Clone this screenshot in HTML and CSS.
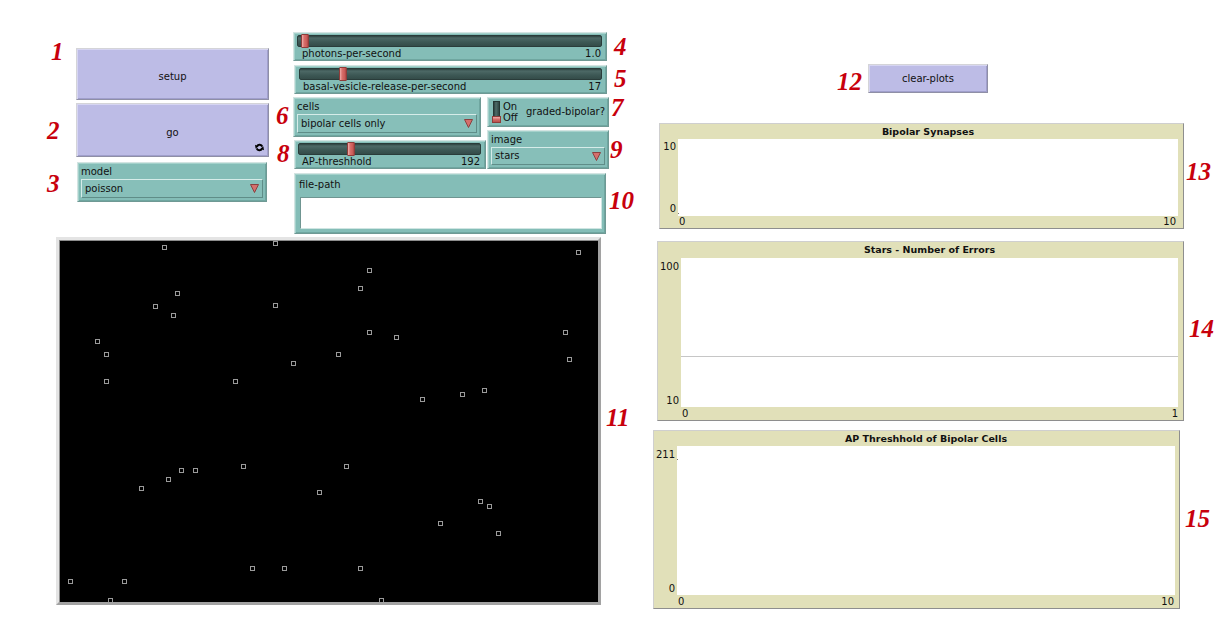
FILE: index.html
```html
<!DOCTYPE html>
<html>
<head>
<meta charset="utf-8">
<link rel="stylesheet" href="styles.css">
</head>
<body>
<div class="page">
  <div class="left-area">
    <div class="top">
      <div class="btn-col">
        <div class="nbtn setup">setup</div>
        <div class="nbtn go">go
          <svg class="forever" width="9" height="9" viewBox="0 0 9 9">
            <path d="M7.3 3.7 A3 3 0 0 0 2 3.1" fill="none" stroke="#000" stroke-width="2"/>
            <polygon points="0,1.8 3.6,3.4 0.6,5.6" fill="#000"/>
            <path d="M1.7 5.3 A3 3 0 0 0 7 5.9" fill="none" stroke="#000" stroke-width="2"/>
            <polygon points="9,7.2 5.4,5.6 8.4,3.4" fill="#000"/>
          </svg>
        </div>
        <div class="tw chooser model">
          <div class="clabel">model</div>
          <div class="cbox"><span>poisson</span><svg class="tri" width="9" height="9" viewBox="0 0 9 9"><polygon points="0.5,0.5 8.5,0.5 4.5,8.5" fill="#d56f6c" stroke="#8a4040" stroke-width="1"/></svg></div>
        </div>
      </div>
      <div class="mid-col">
        <div class="tw slider photons">
          <div class="track"><div class="knob" style="left:3px"></div></div>
          <div class="slabel"><span>photons-per-second</span><span>1.0</span></div>
        </div>
        <div class="tw slider basal">
          <div class="track"><div class="knob" style="left:39px"></div></div>
          <div class="slabel"><span>basal-vesicle-release-per-second</span><span>17</span></div>
        </div>
        <div class="row">
          <div class="col-a">
            <div class="tw chooser cells">
              <div class="clabel">cells</div>
              <div class="cbox"><span>bipolar cells only</span><svg class="tri" width="9" height="9" viewBox="0 0 9 9"><polygon points="0.5,0.5 8.5,0.5 4.5,8.5" fill="#d56f6c" stroke="#8a4040" stroke-width="1"/></svg></div>
            </div>
            <div class="tw slider ap">
              <div class="track"><div class="knob" style="left:48px"></div></div>
              <div class="slabel"><span>AP-threshhold</span><span>192</span></div>
            </div>
          </div>
          <div class="col-b">
            <div class="tw switch">
              <div class="sw"><div class="sw-track"></div><div class="sw-knob"></div></div>
              <div class="onoff"><span>On</span><span>Off</span></div>
              <div class="swlabel">graded-bipolar?</div>
            </div>
            <div class="tw chooser image">
              <div class="clabel">image</div>
              <div class="cbox"><span>stars</span><svg class="tri" width="9" height="9" viewBox="0 0 9 9"><polygon points="0.5,0.5 8.5,0.5 4.5,8.5" fill="#d56f6c" stroke="#8a4040" stroke-width="1"/></svg></div>
            </div>
          </div>
        </div>
        <div class="tw input filepath">
          <div class="clabel">file-path</div>
          <div class="field"></div>
        </div>
      </div>
    </div>
    <div class="world">
      <svg width="539" height="362" viewBox="0 0 539 362" class="stars">
        <g fill="none" stroke="#9a9a9a" stroke-width="1">
          <rect x="103.5" y="5.5" width="4" height="4"/>
          <rect x="214.5" y="1.5" width="4" height="4"/>
          <rect x="517.5" y="10.5" width="4" height="4"/>
          <rect x="308.5" y="28.5" width="4" height="4"/>
          <rect x="299.5" y="46.5" width="4" height="4"/>
          <rect x="116.5" y="51.5" width="4" height="4"/>
          <rect x="94.5" y="64.5" width="4" height="4"/>
          <rect x="214.5" y="63.5" width="4" height="4"/>
          <rect x="112.5" y="73.5" width="4" height="4"/>
          <rect x="308.5" y="90.5" width="4" height="4"/>
          <rect x="335.5" y="95.5" width="4" height="4"/>
          <rect x="504.5" y="90.5" width="4" height="4"/>
          <rect x="36.5" y="99.5" width="4" height="4"/>
          <rect x="45.5" y="112.5" width="4" height="4"/>
          <rect x="277.5" y="112.5" width="4" height="4"/>
          <rect x="232.5" y="121.5" width="4" height="4"/>
          <rect x="508.5" y="117.5" width="4" height="4"/>
          <rect x="45.5" y="139.5" width="4" height="4"/>
          <rect x="174.5" y="139.5" width="4" height="4"/>
          <rect x="423.5" y="148.5" width="4" height="4"/>
          <rect x="401.5" y="152.5" width="4" height="4"/>
          <rect x="361.5" y="157.5" width="4" height="4"/>
          <rect x="120.5" y="228.5" width="4" height="4"/>
          <rect x="134.5" y="228.5" width="4" height="4"/>
          <rect x="182.5" y="224.5" width="4" height="4"/>
          <rect x="285.5" y="224.5" width="4" height="4"/>
          <rect x="107.5" y="237.5" width="4" height="4"/>
          <rect x="80.5" y="246.5" width="4" height="4"/>
          <rect x="258.5" y="250.5" width="4" height="4"/>
          <rect x="419.5" y="259.5" width="4" height="4"/>
          <rect x="428.5" y="264.5" width="4" height="4"/>
          <rect x="379.5" y="281.5" width="4" height="4"/>
          <rect x="437.5" y="291.5" width="4" height="4"/>
          <rect x="191.5" y="326.5" width="4" height="4"/>
          <rect x="223.5" y="326.5" width="4" height="4"/>
          <rect x="299.5" y="326.5" width="4" height="4"/>
          <rect x="9.5" y="339.5" width="4" height="4"/>
          <rect x="63.5" y="339.5" width="4" height="4"/>
          <rect x="49.5" y="358.5" width="4" height="4"/>
          <rect x="320.5" y="358.5" width="4" height="4"/>
        </g>
      </svg>
    </div>
  </div>

  <div class="right-area">
    <div class="nbtn clear">clear-plots</div>

    <div class="plot p1">
      <div class="ptitle">Bipolar Synapses</div>
      <div class="pbody">
        <div class="yaxis"><span>10</span><span>0</span></div>
        <div class="canvas"><span class="pen-dot bl"></span></div>
      </div>
      <div class="xaxis"><span>0</span><span>10</span></div>
    </div>

    <div class="plot p2">
      <div class="ptitle">Stars - Number of Errors</div>
      <div class="pbody">
        <div class="yaxis"><span>100</span><span>10</span></div>
        <div class="canvas"><div class="hline"></div></div>
      </div>
      <div class="xaxis"><span>0</span><span>1</span></div>
    </div>

    <div class="plot p3">
      <div class="ptitle">AP Threshhold of Bipolar Cells</div>
      <div class="pbody">
        <div class="yaxis"><span>211</span><span>0</span></div>
        <div class="canvas"><span class="pen-dot tl"></span></div>
      </div>
      <div class="xaxis"><span>0</span><span>10</span></div>
    </div>
  </div>

  <span class="ann a1">1</span>
  <span class="ann a2">2</span>
  <span class="ann a3">3</span>
  <span class="ann a4">4</span>
  <span class="ann a5">5</span>
  <span class="ann a6">6</span>
  <span class="ann a7">7</span>
  <span class="ann a8">8</span>
  <span class="ann a9">9</span>
  <span class="ann a10">10</span>
  <span class="ann a11">11</span>
  <span class="ann a12">12</span>
  <span class="ann a13">13</span>
  <span class="ann a14">14</span>
  <span class="ann a15">15</span>
</div>
</body>
</html>
```
FILE: styles.css
```css
* { box-sizing: border-box; }
html, body { margin: 0; padding: 0; }
body {
  width: 1220px;
  height: 626px;
  overflow: hidden;
  background: #ffffff;
  font-family: "DejaVu Sans", "Noto Sans", sans-serif;
  font-size: 10px;
  line-height: 12px;
  color: #111;
}
.page { position: relative; display: flex; width: 1220px; height: 626px; }

.left-area { width: 640px; display: flex; flex-direction: column; }
.top { display: flex; align-items: flex-start; height: 234px; }
.btn-col { margin: 48px 0 0 76px; width: 193px; display: flex; flex-direction: column; }
.mid-col { margin: 32px 0 0 24px; width: 316px; display: flex; flex-direction: column; }

/* buttons */
.nbtn {
  position: relative;
  display: flex;
  align-items: center;
  justify-content: center;
  background: #bdbce6;
  border: 1px solid;
  border-color: #d4d4d8 #8f8fa6 #8f8fa6 #d4d4d8;
  box-shadow: inset 1px 1px 0 #d6d5f2, inset -1px -1px 0 #a09fcc;
  color: #111;
  white-space: nowrap;
}
.setup { height: 52px; padding-top: 5px; }
.go { height: 54px; margin-top: 3px; padding-top: 6px; }
.forever { position: absolute; right: 4px; bottom: 4px; }

/* teal widgets */
.tw {
  background: #84bdb7;
  border: 1px solid;
  border-color: #d3e4e2 #6f9994 #6f9994 #d3e4e2;
  box-shadow: inset 1px 1px 0 #a4d1cb, inset -1px -1px 0 #6fa6a0;
  white-space: nowrap;
}

/* chooser */
.chooser { padding: 3px; display: flex; flex-direction: column; }
.clabel { line-height: 12px; }
.cbox {
  margin-top: 1px;
  height: 20px;
  display: flex;
  align-items: center;
  justify-content: space-between;
  padding: 0 3px 0 3px;
  background: #87bfb9;
  border: 1px solid;
  border-color: #d6ece9 #5f8d88 #5f8d88 #d6ece9;
}
.tri { display: block; }
.model { width: 190px; height: 40px; margin: 5px 0 0 1px; }
.cells { width: 188px; height: 40px; }
.image { width: 122px; height: 39px; margin-top: 3px; }
.image .cbox { height: 19px; }

/* slider */
.slider { display: flex; flex-direction: column; height: 29px; }
.track {
  position: relative;
  height: 12px;
  margin: 2px 4px 0 3px;
  background: linear-gradient(#2c413f, #4d6966 20%, #3d5855 60%, #344c49);
  border: 1px solid #2a3c3a;
  border-radius: 2px;
}
.knob {
  position: absolute;
  top: -2px;
  width: 8px;
  height: 14px;
  background: linear-gradient(to right, #f1b0ad, #d96f6b 35%, #c95a57 80%, #a94442);
  border: 1px solid #8e3c3a;
  border-radius: 1px;
}
.slabel {
  display: flex;
  justify-content: space-between;
  line-height: 12px;
  padding: 1px 5px 0 8px;
}
.photons { width: 314px; }
.basal { width: 313px; margin: 4px 0 0 1px; }
.basal .track { margin-left: 4px; }
.ap { width: 192px; margin: 3px 0 0 1px; }
.ap .slabel { padding-left: 7px; }

.row { display: flex; margin-top: 3px; height: 72px; }
.col-a { width: 193px; display: flex; flex-direction: column; }
.col-b { margin-left: 1px; display: flex; flex-direction: column; }

/* switch */
.switch {
  width: 122px;
  height: 30px;
  display: flex;
  align-items: center;
  padding: 0 2px 0 4px;
}
.sw { position: relative; flex: none; width: 9px; height: 22px; }
.sw-track {
  position: absolute;
  left: 1px; top: 0;
  width: 7px; height: 21px;
  background: linear-gradient(to right, #2c403e, #4f6c69 40%, #2f4542);
  border: 1px solid #263735;
}
.sw-knob {
  position: absolute;
  left: 0; bottom: 0;
  width: 9px; height: 7px;
  background: linear-gradient(#f0aeab, #d46a66 50%, #b8504d);
  border: 1px solid #8e3c3a;
}
.onoff {
  flex: none;
  display: flex;
  flex-direction: column;
  margin-left: 2px;
  line-height: 11px;
  width: 17px;
}
.swlabel { margin-left: 6px; flex: none; }

/* input */
.filepath {
  width: 312px;
  height: 61px;
  margin: 4px 0 0 1px;
  padding: 5px 0 0 4px;
}
.field {
  margin: 6px 0 0 1px;
  width: 302px;
  height: 32px;
  background: #ffffff;
  border: 1px solid;
  border-color: #6f9591 #cfe5e2 #cfe5e2 #6f9591;
}

/* world */
.world {
  margin: 3px 0 0 56px;
  width: 545px;
  height: 368px;
  background: #000;
  border: 3px solid;
  border-color: #e4e4e4 #a2a2a2 #a2a2a2 #e4e4e4;
  box-shadow: inset 1px 1px 0 #8c8c8c;
  overflow: hidden;
}
.stars { display: block; }

/* right area */
.right-area { margin-left: 13px; padding-top: 64px; display: flex; flex-direction: column; }
.clear { width: 120px; height: 29px; margin-left: 215px; }

.plot {
  background: #e1e0b9;
  border: 1px solid;
  border-color: #cfcfcf #8e8e8e #8e8e8e #cfcfcf;
  display: flex;
  flex-direction: column;
}
.ptitle {
  font-weight: bold;
  font-size: 9.5px;
  text-align: center;
  color: #111;
}
.pbody { display: flex; flex: 1; }
.yaxis {
  display: flex;
  flex-direction: column;
  justify-content: space-between;
  align-items: flex-end;
  padding-right: 2px;
}
.canvas { position: relative; flex: 1; background: #ffffff; }
.xaxis { display: flex; justify-content: space-between; }

.p1 { width: 525px; height: 106px; margin: 30px 0 0 6px; }
.p1 .ptitle { height: 15px; line-height: 15px; padding: 0 5px 0 18px; }
.p1 .pbody { padding-right: 5px; }
.p1 .yaxis { width: 18px; padding-top: 2px; padding-bottom: 1px; }
.p1 .xaxis { height: 12px; line-height: 12px; padding: 0 7px 0 19px; }

.p2 { width: 527px; height: 180px; margin: 12px 0 0 4px; }
.p2 .ptitle { height: 16px; line-height: 16px; padding: 0 5px 0 23px; }
.p2 .pbody { padding-right: 5px; }
.p2 .yaxis { width: 23px; padding-top: 3px; }
.p2 .xaxis { height: 13px; line-height: 13px; padding: 0 5px 0 24px; }

.p3 { width: 527px; height: 179px; margin: 9px 0 0 0; }
.p3 .ptitle { height: 15px; line-height: 15px; padding: 0 4px 0 23px; }
.p3 .pbody { padding-right: 4px; }
.p3 .yaxis { width: 23px; padding-top: 3px; }
.p3 .xaxis { height: 13px; line-height: 13px; padding: 0 5px 0 24px; }

.hline {
  position: absolute;
  left: 0; right: 0;
  top: 98px;
  height: 0;
  border-top: 1.5px solid #c6c6c6;
}
.pen-dot { position: absolute; width: 1px; height: 1px; background: #7a7a7a; }
.pen-dot.bl { left: 0; bottom: 2px; }
.pen-dot.tl { left: 0; top: 13px; }

/* annotation numbers */
.ann {
  position: absolute;
  font-family: "Liberation Serif", "DejaVu Serif", serif;
  font-style: italic;
  font-weight: bold;
  font-size: 25px;
  line-height: 25px;
  color: #c8000c;
}
.a1 { left: 51px; top: 39px; }
.a2 { left: 47px; top: 118px; }
.a3 { left: 47px; top: 171px; }
.a4 { left: 614px; top: 34px; }
.a5 { left: 614px; top: 66px; }
.a6 { left: 276px; top: 103px; }
.a7 { left: 611px; top: 95px; }
.a8 { left: 277px; top: 141px; }
.a9 { left: 610px; top: 137px; }
.a10 { left: 609px; top: 188px; }
.a11 { left: 606px; top: 405px; }
.a12 { left: 837px; top: 69px; }
.a13 { left: 1186px; top: 159px; }
.a14 { left: 1189px; top: 316px; }
.a15 { left: 1185px; top: 506px; }
```
